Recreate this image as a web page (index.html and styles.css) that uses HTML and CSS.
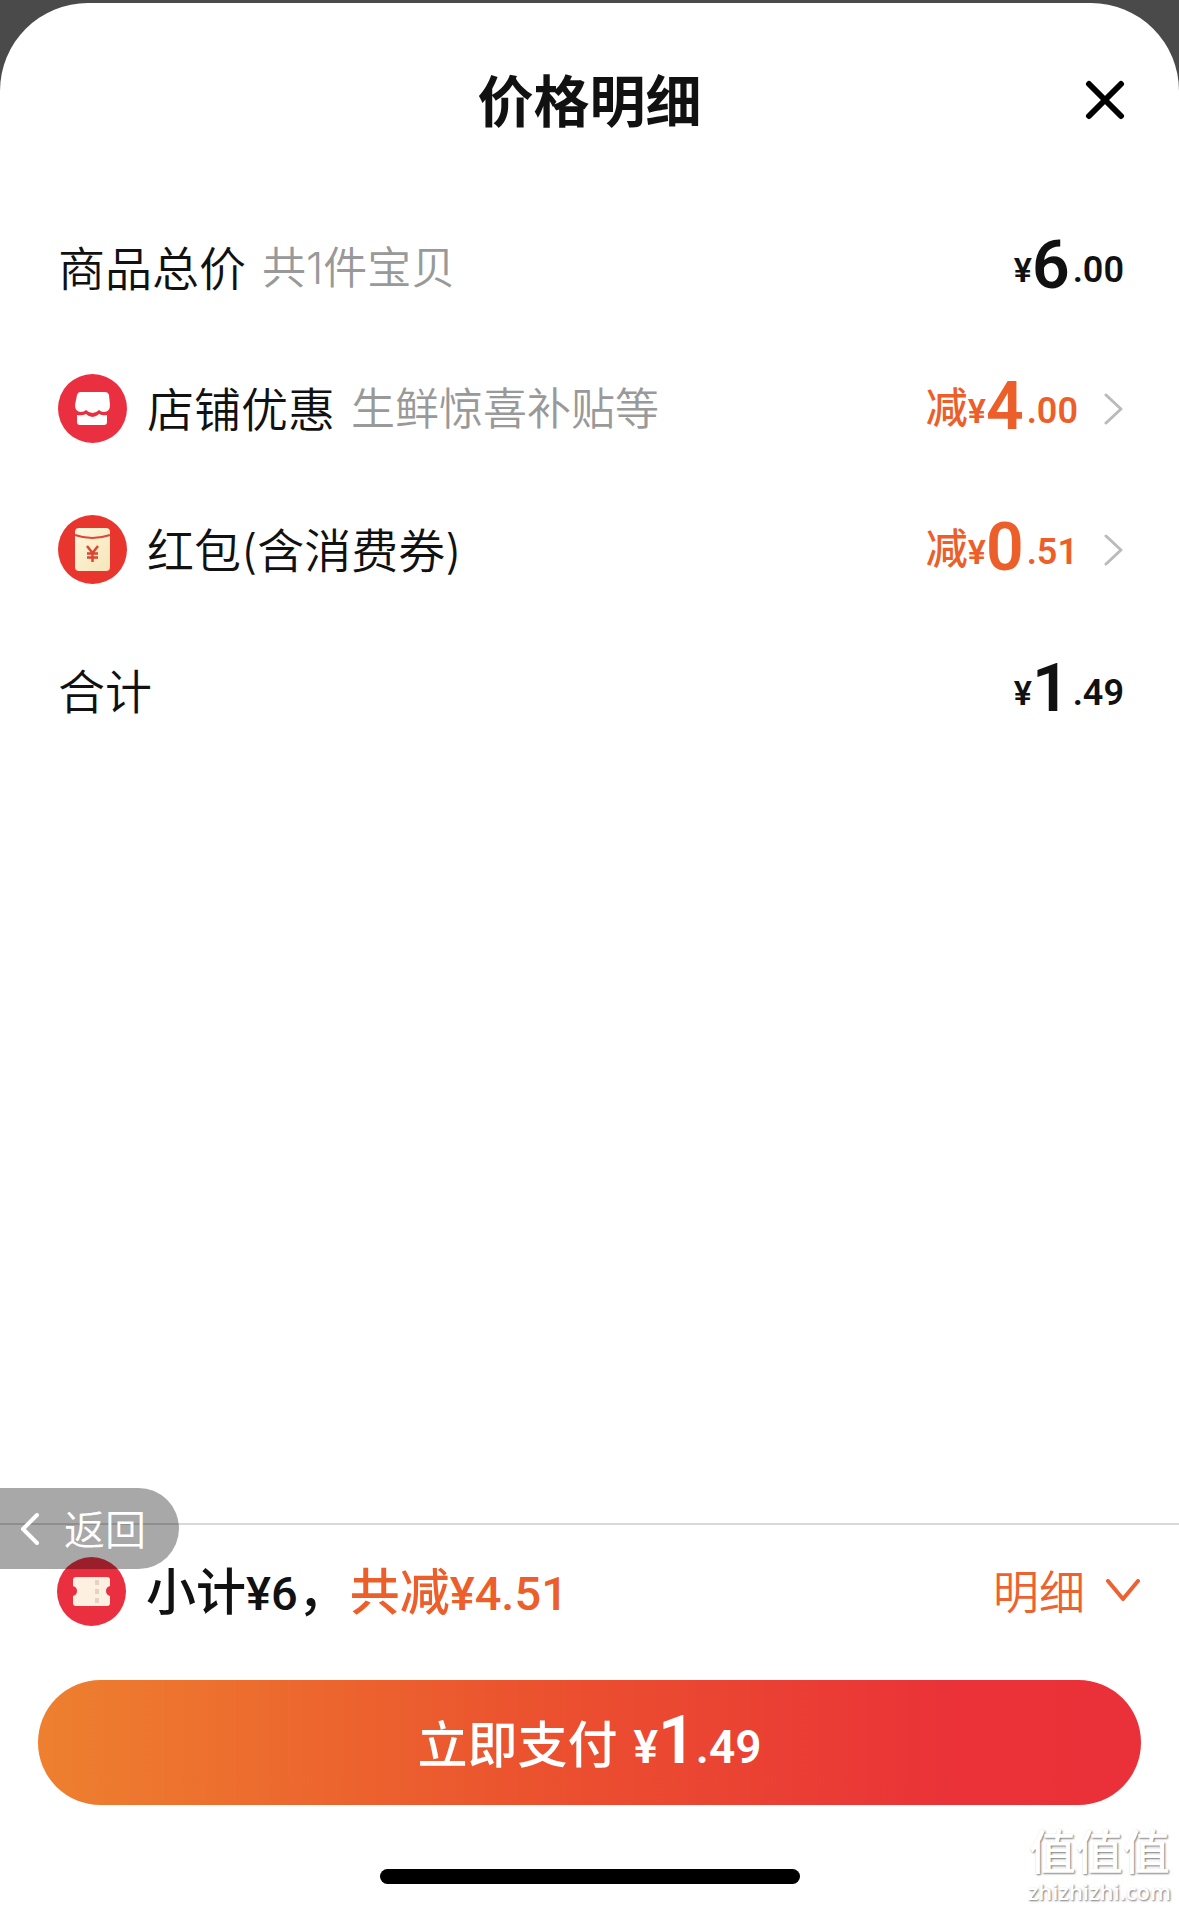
FILE: index.html
```html
<!DOCTYPE html>
<html lang="zh-CN">
<head>
<meta charset="utf-8">
<meta name="viewport" content="width=device-width, initial-scale=1">
<title>价格明细</title>
<link rel="stylesheet" href="styles.css">
</head>
<body>
<main class="sheet">
  <header class="header">
    <h1 class="title">价格明细</h1>
    <button class="close" type="button" aria-label="关闭">
      <svg width="40" height="40" viewBox="0 0 40 40" fill="none" stroke="#000" stroke-width="6" stroke-linecap="round"><path d="M4 4L36 36M36 4L4 36"/></svg>
    </button>
  </header>

  <ul class="rows">
    <li class="row">
      <span class="label">商品总价</span>
      <span class="note">共1件宝贝</span>
      <span class="price"><span class="yen">¥</span><span class="big">6</span><span class="cents">.00</span></span>
    </li>
    <li class="row">
      <svg class="badge" viewBox="0 0 69 69">
        <circle cx="34.500" cy="34.500" r="34.500" fill="#ea3040"/>
        <path d="M22 18h25q3 0 4 3l1 10q0 7-6 7-3 0-5-2-3 3-6.500 3t-6.500-3q-2 2-5 2-6 0-6-7l2-10q1-3 3-3z" fill="#fff"/>
        <path d="M19 41q5 1 9-1 3 3 6.500 3t6.500-3q4 2 8 1v7q0 3-3 3H22q-3 0-3-3z" fill="#fff"/>
      </svg>
      <span class="label">店铺优惠</span>
      <span class="note">生鲜惊喜补贴等</span>
      <span class="price discount"><span class="minus">减</span><span class="yen">¥</span><span class="big">4</span><span class="cents">.00</span></span>
      <svg class="arrow" width="20" height="34" viewBox="0 0 20 34"><path d="M2 3L17 17L2 31"/></svg>
    </li>
    <li class="row">
      <svg class="badge" viewBox="0 0 69 69">
        <defs><linearGradient id="paper" x1="0" y1="0" x2="1" y2="1"><stop offset="0" stop-color="#fff6dc"/><stop offset="1" stop-color="#f5e6b8"/></linearGradient></defs>
        <circle cx="34.500" cy="34.500" r="34.500" fill="#e8352e"/>
        <rect x="17" y="13" width="35" height="43" rx="4" fill="url(#paper)"/>
        <path d="M17 20Q34 26 52 20" fill="none" stroke="#d9493a" stroke-width="2"/>
        <path d="M29 31l5.500 7 5.500-7M34.500 38v9M29 38.500h11M29 42.500h11" fill="none" stroke="#dc4632" stroke-width="2.500"/>
      </svg>
      <span class="label">红包(含消费券)</span>
      <span class="price discount"><span class="minus">减</span><span class="yen">¥</span><span class="big">0</span><span class="cents">.51</span></span>
      <svg class="arrow" width="20" height="34" viewBox="0 0 20 34"><path d="M2 3L17 17L2 31"/></svg>
    </li>
    <li class="row">
      <span class="label">合计</span>
      <span class="price"><span class="yen">¥</span><span class="big">1</span><span class="cents">.49</span></span>
    </li>
  </ul>

  <footer class="footer">
    <div class="summary">
      <svg class="badge" viewBox="0 0 69 69">
        <circle cx="34.500" cy="34.500" r="34.500" fill="#ea3040"/>
        <path d="M19 20h31q3 0 3 3v6q-4 1-4 5t4 5v7q0 3-3 3H19q-3 0-3-3v-7q4-1 4-5t-4-5v-6q0-3 3-3z" fill="#fdf0e0"/>
        <path d="M40 23v5M40 32v5M40 41v5" stroke="#e3d3c0" stroke-width="4"/>
      </svg>
      <span class="subtotal">小计<span class="num">¥6</span>，</span>
      <span class="saved">共减<span class="num">¥4.51</span></span>
      <button class="toggle" type="button"><span>明细</span>
        <svg width="36" height="24" viewBox="0 0 36 24" fill="none" stroke="#ec6231" stroke-width="4" stroke-linecap="round" stroke-linejoin="round"><path d="M3 2L18 20L33 2"/></svg>
      </button>
    </div>
    <button class="pay" type="button">
      <span>立即支付</span>
      <span class="pay-price">¥<span class="pay-big">1</span>.49</span>
    </button>
    <div class="home-bar"></div>
    <button class="back" type="button">
      <svg width="20" height="32" viewBox="0 0 20 32" fill="none" stroke="#fff" stroke-width="4" stroke-linecap="round" stroke-linejoin="round"><path d="M17 2L3 16L17 30"/></svg>
      <span>返回</span>
    </button>
    <div class="watermark"><span class="mark-name">值值值</span><span class="mark-url">zhizhizhi.com</span></div>
  </footer>
</main>
</body>
</html>
```
FILE: styles.css
```css
* { box-sizing: border-box; }

body {
  margin: 0;
  padding-top: 3px;
  background: #4a4a4a;
  color: #111;
  font-family: "Noto Sans CJK SC", sans-serif;
}

button {
  border: 0;
  padding: 0;
  background: none;
  color: inherit;
  font: inherit;
  cursor: pointer;
}

svg { display: block; flex: none; }

.sheet {
  display: flex;
  flex-direction: column;
  min-height: calc(100vh - 3px);
  background: #fff;
  border-radius: 88px 88px 0 0;
}

.header {
  display: grid;
  grid-template-columns: 1fr auto 1fr;
  align-items: center;
  height: 194px;
  padding: 0 54px;
}

.title {
  grid-column: 2;
  margin: 0;
  padding-bottom: 4px;
  font-size: 56px;
  font-weight: 600;
  line-height: 64px;
}

.close { justify-self: end; }

.rows {
  flex: 1;
  margin: 0;
  padding: 0 55px 0 58px;
  list-style: none;
}

.row {
  display: flex;
  align-items: center;
  height: 141px;
}

.badge { width: 69px; height: 69px; margin-right: 20px; }

.label,
.note {
  font-family: Inter, "Noto Sans CJK SC", sans-serif;
  font-weight: 350;
  line-height: 56px;
}

.label { padding-top: 2px; font-size: 47px; }

.note {
  margin-left: 16px;
  color: #999;
  font-size: 44px;
}

.price {
  margin-left: auto;
  font-family: Roboto, "Noto Sans CJK SC", sans-serif;
  font-size: 36px;
  font-weight: 600;
  line-height: 72px;
  white-space: nowrap;
}

.yen { font-size: 34px; }

.big { font-size: 66px; vertical-align: -6px; }

.cents { margin-left: 3px; }

.discount { color: #ec5f2b; }

.minus { font-size: 42px; font-weight: 500; }

.arrow {
  margin-left: 26px;
  fill: none;
  stroke: #bbb;
  stroke-width: 3;
  stroke-linecap: round;
  stroke-linejoin: round;
}

.footer {
  position: relative;
  border-top: 2px solid #d8d8d8;
  padding: 0 38px 24px;
}

.summary {
  display: flex;
  align-items: center;
  height: 132px;
  padding-left: 19px;
  font-size: 50px;
  font-weight: 500;
  line-height: 60px;
}

.toggle span,
.back span { padding-bottom: 4px; }

.num {
  font-family: Roboto, sans-serif;
  font-size: 47px;
  font-weight: 500;
}

.saved { margin-left: 2px; color: #ec5f2b; }

.toggle {
  display: flex;
  align-items: center;
  gap: 20px;
  margin-left: auto;
  color: #ec6231;
  font-size: 46px;
  font-weight: 350;
}

.pay {
  display: flex;
  align-items: baseline;
  justify-content: center;
  gap: 16px;
  width: 100%;
  height: 125px;
  margin: 23px 0 64px;
  padding-bottom: 4px;
  border-radius: 63px;
  background: linear-gradient(90deg, #ee802f, #eb522e 45%, #ea3338 82%, #ea3038);
  color: #fff;
  font-size: 50px;
  font-weight: 500;
  line-height: 121px;
}

.pay-price {
  font-family: Roboto, sans-serif;
  font-size: 46px;
  font-weight: 600;
}

.pay-big { font-size: 66px; }

.home-bar {
  width: 420px;
  max-width: 100%;
  height: 15px;
  margin: 0 auto;
  border-radius: 8px;
  background: #000;
}

.back {
  position: absolute;
  top: -37px;
  left: 0;
  display: flex;
  align-items: center;
  gap: 24px;
  width: 179px;
  height: 81px;
  padding-left: 20px;
  border-radius: 0 41px 41px 0;
  background: rgba(0, 0, 0, 0.34);
  color: #fff;
  font-size: 41px;
  font-weight: 350;
}

.watermark {
  position: absolute;
  right: 8px;
  bottom: 2px;
  display: flex;
  flex-direction: column;
  align-items: center;
  color: #fff;
  text-shadow: 1px 1px 2px #777;
}

.mark-name { font-size: 47px; font-weight: 500; line-height: 54px; }

.mark-url { font-family: "Open Sans", sans-serif; font-size: 22px; font-weight: 600; line-height: 30px; }
```
